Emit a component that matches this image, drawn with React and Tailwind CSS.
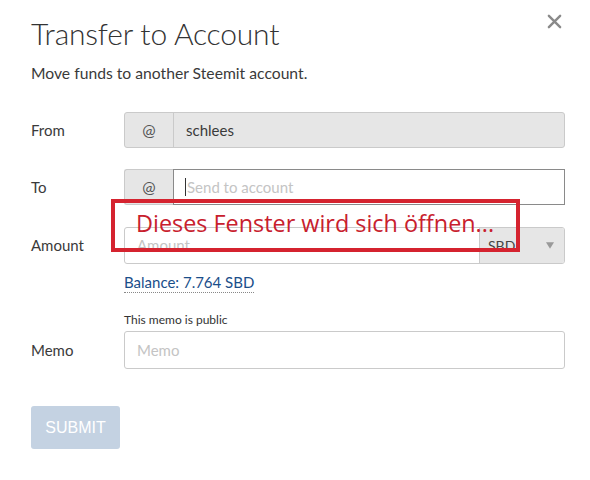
import React from 'react';

// Eine Zeile im Formular: Label links, Feld rechts
const Row = ({ label, children, className = '' }) => (
  <div className={`flex items-center ${className}`}>
    <div className="w-[93px] shrink-0 text-[15px] text-[#3a3a3a]">{label}</div>
    <div className="flex-1">{children}</div>
  </div>
);

const App = () => {
  return (
    <div className="relative w-[590px] h-[480px] bg-white font-['Lato',sans-serif] text-[#3a3a3a]">
      {/* Schließen */}
      <button className="absolute left-[547px] top-[14px] w-[15px] h-[15px] text-[#8a8a8a]">
        <svg viewBox="0 0 16 16" className="w-full h-full" fill="none" stroke="currentColor" strokeWidth="2.6" strokeLinecap="round">
          <path d="M2 2 L14 14 M14 2 L2 14" />
        </svg>
      </button>

      <div className="pl-[31px] pr-[25px] pt-[14px]">
        <h2 className="text-[30px] leading-[38px] font-light tracking-[-0.2px] text-[#333]">Transfer to Account</h2>
        <p className="mt-[11px] text-[15.7px] leading-[20px]">Move funds to another Steemit account.</p>

        <Row label="From" className="mt-[29px]">
          <div className="flex h-[36px] border border-[#cacaca] rounded-[3px] overflow-hidden bg-[#e6e6e6]">
            <div className="w-[49px] flex items-center justify-center border-r border-[#cacaca] text-[#555]">@</div>
            <div className="flex-1 flex items-center px-[12px] text-[15px]">schlees</div>
          </div>
        </Row>

        <Row label="To" className="mt-[21px]">
          <div className="flex h-[36px]">
            <div className="w-[49px] flex items-center justify-center border border-r-0 border-[#cacaca] rounded-l-[3px] bg-[#e6e6e6] text-[#555]">@</div>
            <div className="flex-1 flex items-center px-[11px] border border-[#8a8a8a] text-[15px] text-[#c4c4c4]">
              <span className="w-px h-[18px] bg-[#333] mr-[1px]" />
              Send to account
            </div>
          </div>
        </Row>

        <Row label="Amount" className="mt-[22px]">
          <div className="flex h-[37px] border border-[#cacaca] rounded-[3px] overflow-hidden">
            <div className="flex-1 flex items-center px-[12px] text-[15px] text-[#c4c4c4]">Amount</div>
            <div className="w-[85px] flex items-center justify-between pl-[8px] pr-[10px] bg-[#e6e6e6] border-l border-[#cacaca] text-[14px] text-[#444]">
              <span>SBD</span>
              <svg viewBox="0 0 10 8" className="w-[8px] h-[7px]" fill="#999">
                <path d="M0 0 H10 L5 8 Z" />
              </svg>
            </div>
          </div>
        </Row>

        <div className="ml-[93px] mt-[6px]">
          <span className="inline-block text-[15px] leading-[20px] text-[#1a4e8a] border-b border-dotted border-[#888]">Balance: 7.764 SBD</span>
        </div>

        <div className="flex items-end mt-[18px]">
          <div className="w-[93px] shrink-0 h-[38px] flex items-center text-[15px]">Memo</div>
          <div className="flex-1">
            <div className="text-[12px] leading-[16px] text-[#333]">This memo is public</div>
            <div className="mt-[3px] h-[38px] border border-[#cacaca] rounded-[3px] flex items-center px-[12px] text-[15px] text-[#c4c4c4]">Memo</div>
          </div>
        </div>

        <button className="mt-[37px] w-[89px] h-[43px] rounded-[3px] bg-[#c4d2e2] text-white text-[16px] font-['Liberation_Sans',sans-serif]">
          SUBMIT
        </button>
      </div>

      {/* Hinweis-Overlay */}
      <div className="absolute left-[111px] top-[199px] w-[409px] h-[53px] border-[4px] border-[#d5232f] flex items-center pl-[21px]">
        <span className="text-[23.4px] leading-none text-[#c8202d] font-['Open_Sans',sans-serif] -mt-[3px]">Dieses Fenster wird sich öffnen...</span>
      </div>
    </div>
  );
};

export default App;
